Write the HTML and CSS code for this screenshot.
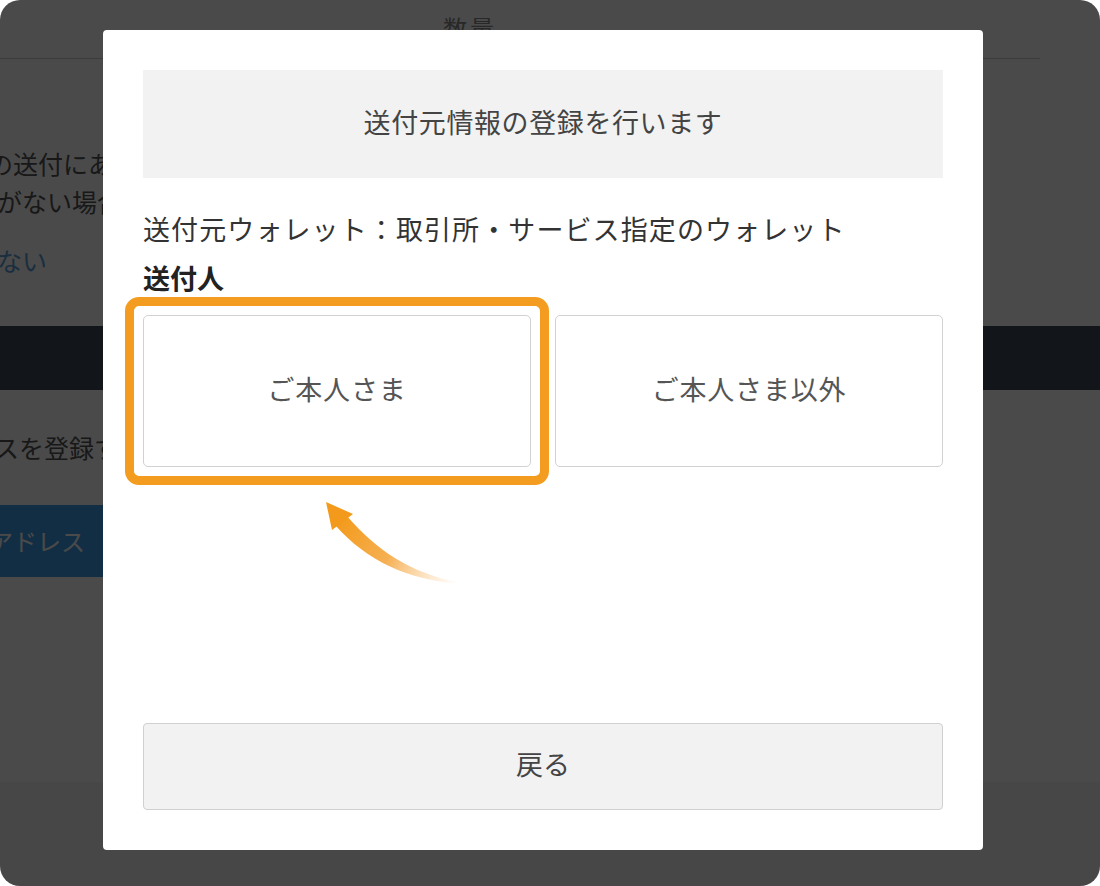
FILE: index.html
```html
<!DOCTYPE html>
<html lang="ja">
<head>
  <meta charset="UTF-8" />
  <title>送付元情報の登録</title>
  <link rel="stylesheet" href="styles.css">
</head>
<body>

  <div class="frame">

    <div class="page">
      <div class="page-head"><span class="col-label">数量</span></div>

      <div class="notice">
        <p class="notice-line first">の送付にあた</p>
        <p class="notice-line second">がない場合</p>
        <a class="notice-link" href="#">ない</a>
      </div>

      <div class="dark-bar"></div>

      <p class="register-text">スを登録す</p>

      <div class="address-btn"><span>アドレス</span></div>

      <div class="page-body"></div>
      <div class="page-foot"></div>
    </div>

    <div class="overlay">
      <div class="modal">
        <div class="modal-title">送付元情報の登録を行います</div>

        <p class="wallet">送付元ウォレット：取引所・サービス指定のウォレット</p>
        <p class="sender-label">送付人</p>

        <div class="choices">
          <div class="choice is-marked">ご本人さま</div>
          <div class="choice">ご本人さま以外</div>
        </div>

        <div class="back-btn">戻る</div>
      </div>
    </div>

    <svg class="hint-arrow" viewBox="300 490 170 100" width="170" height="100">
      <defs>
        <linearGradient id="fade" gradientUnits="userSpaceOnUse" x1="340" y1="520" x2="458" y2="583">
          <stop offset="0" stop-color="#f39a1c" stop-opacity="1" />
          <stop offset="0.45" stop-color="#f4a233" stop-opacity="0.85" />
          <stop offset="1" stop-color="#f8c480" stop-opacity="0" />
        </linearGradient>
      </defs>
      <path d="M347 516 C 376 550 412 574 458 582 L 458 583.5 C 408 580 366 560 336 526 Z" fill="url(#fade)" />
      <polygon points="326,502 353,514 332,530" fill="#f39a1c" />
    </svg>

  </div>

</body>
</html>
```

FILE: styles.css
```css
* {
  box-sizing: border-box;
}
body {
  margin: 0;
  background: #fff;
  font-family: "Noto Sans CJK JP", "Noto Sans", sans-serif;
}
p {
  margin: 0;
}
.frame {
  position: relative;
  width: 1100px;
  height: 886px;
  border-radius: 20px;
  overflow: hidden;
  background: #fff;
}

/* page under the dialog */
.page {
  height: 100%;
  display: flex;
  flex-direction: column;
  color: #555;
}
.page-head {
  width: 1040px;
  height: 59px;
  border-bottom: 1px solid #d0d0d0;
  padding-left: 443px;
  font-size: 24px;
  line-height: 56px;
  letter-spacing: 3px;
  color: #8a8a8a;
}
.notice {
  margin-top: 85px;
  font-size: 25px;
  line-height: 38px;
}
.notice-line {
  white-space: nowrap;
}
.notice-line.first {
  margin-left: -12px;
}
.notice-line.second {
  margin-left: -3px;
}
.notice-link {
  display: block;
  margin-top: 21px;
  margin-left: -3px;
  color: #5a9fd8;
  text-decoration: none;
}
.dark-bar {
  margin-top: 47px;
  height: 64px;
  background: #3e4c5d;
}
.register-text {
  margin-top: 38px;
  margin-left: -6px;
  font-size: 25px;
  line-height: 38px;
}
.address-btn {
  margin-top: 39px;
  margin-left: -130px;
  width: 240px;
  height: 72px;
  padding-left: 119px;
  background: #3e9fea;
  color: #fff;
  font-size: 24px;
  line-height: 72px;
  white-space: nowrap;
}
.page-body {
  flex: 1;
}
.page-foot {
  height: 104px;
  background: #f5f5f5;
}

/* dialog */
.overlay {
  position: absolute;
  inset: 0;
  background: rgba(0, 0, 0, 0.71);
  padding: 30px 0 0 103px;
}
.modal {
  width: 880px;
  height: 820px;
  background: #fff;
  border-radius: 4px;
  padding: 40px;
  display: flex;
  flex-direction: column;
}
.modal-title {
  height: 108px;
  padding-bottom: 6px;
  background: #f2f2f2;
  display: flex;
  align-items: center;
  justify-content: center;
  font-size: 27px;
  letter-spacing: 0.6px;
  color: #444;
}
.wallet {
  margin-top: 31px;
  font-size: 27px;
  line-height: 40px;
  letter-spacing: 1.1px;
  color: #333;
  white-space: nowrap;
}
.sender-label {
  margin-top: 9px;
  font-size: 27px;
  line-height: 40px;
  font-weight: bold;
  color: #222;
}
.choices {
  margin-top: 17px;
  display: grid;
  grid-template-columns: 1fr 1fr;
  gap: 24px;
}
.choice {
  position: relative;
  height: 152px;
  padding-bottom: 6px;
  border: 1px solid #d2d2d2;
  border-radius: 5px;
  background: #fff;
  display: flex;
  align-items: center;
  justify-content: center;
  font-size: 27px;
  letter-spacing: 0.8px;
  color: #555;
}
.choice.is-marked::before {
  content: "";
  position: absolute;
  top: -19px;
  left: -19px;
  right: -19px;
  bottom: -19px;
  border: 9px solid #f49c20;
  border-radius: 14px;
}
.back-btn {
  margin-top: auto;
  height: 87px;
  padding-bottom: 6px;
  background: #f2f2f2;
  border: 1px solid #d0d0d0;
  border-radius: 4px;
  display: flex;
  align-items: center;
  justify-content: center;
  font-size: 27px;
  color: #444;
}

.hint-arrow {
  position: absolute;
  left: 300px;
  top: 490px;
}
```
